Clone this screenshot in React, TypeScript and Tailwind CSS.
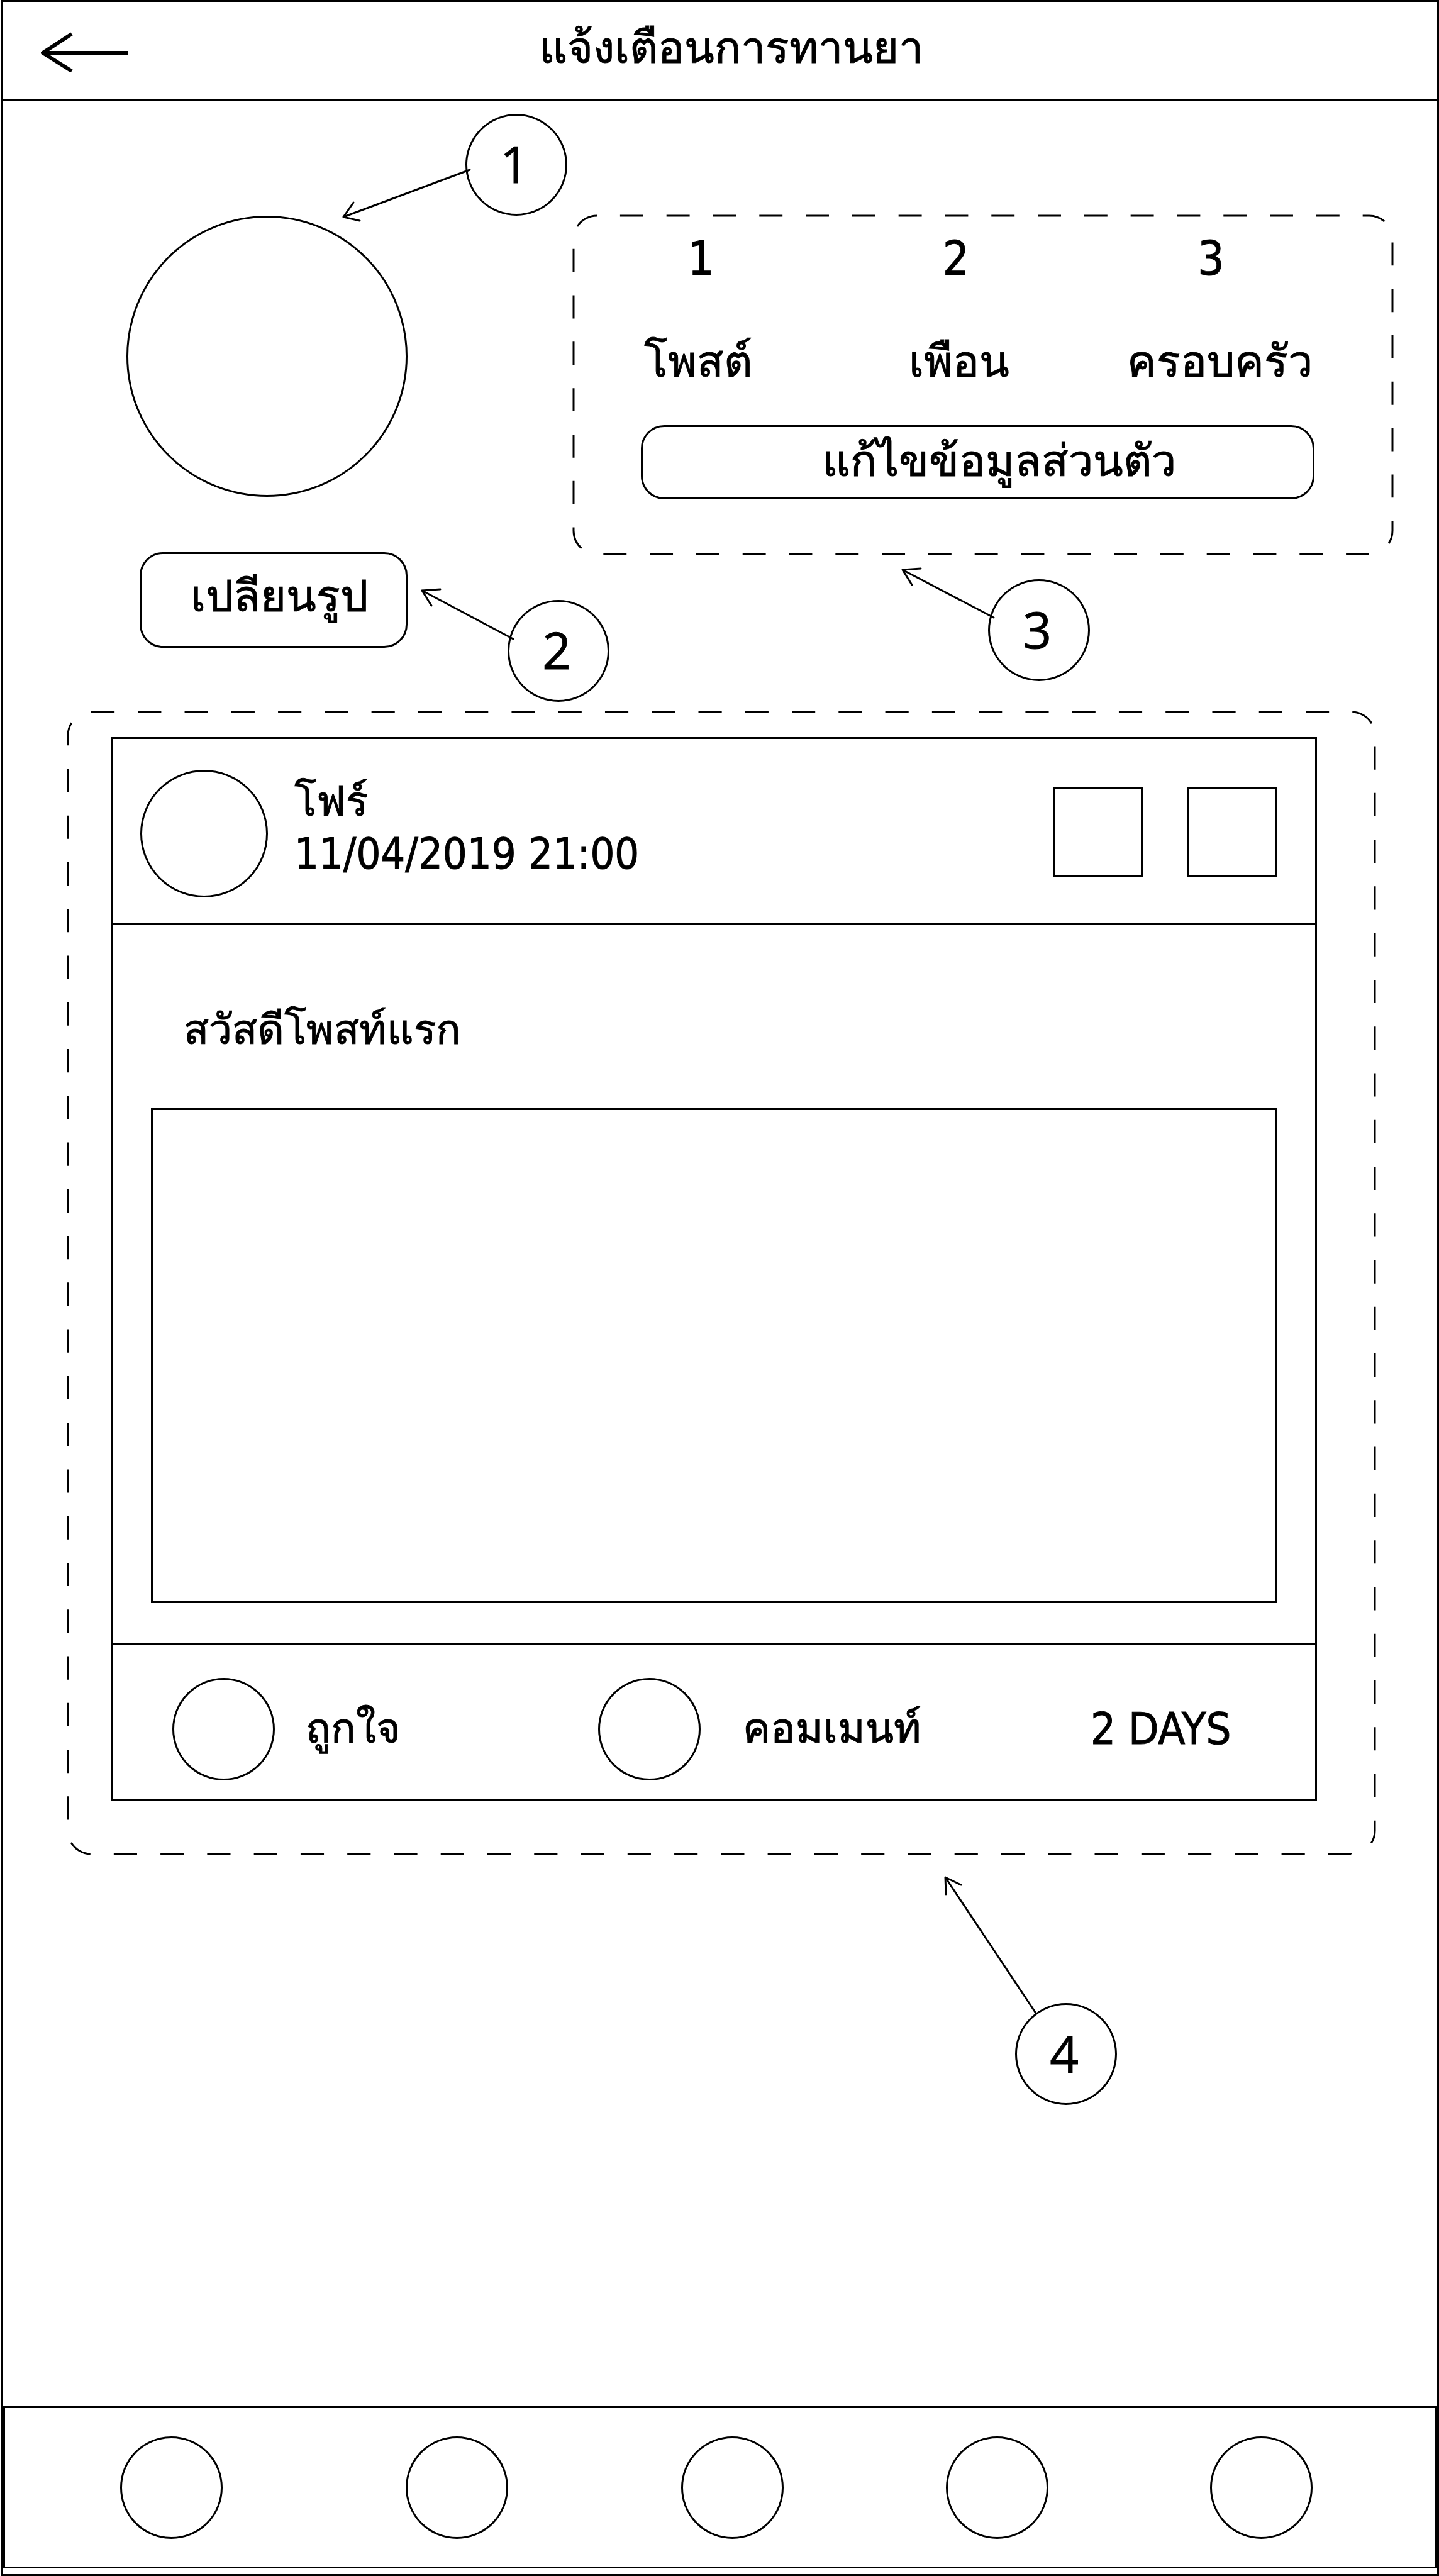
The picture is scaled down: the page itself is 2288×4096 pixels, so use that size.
import type { ReactNode } from "react";

const NAV_ITEMS = ["หน้าแรก", "เพื่อน", "ยา", "ข้อความ", "โปรไฟล์"];

const STATS = [
  { value: "1", label: "โพสต์" },
  { value: "2", label: "เพือน" },
  { value: "3", label: "ครอบครัว" },
];

/** Long-dash rounded outline that follows the size of its parent. */
function DashedOutline({ dashes, offset }: { dashes: number; offset: number }) {
  return (
    <svg className="pointer-events-none absolute inset-0 size-full overflow-visible" aria-hidden="true">
      <rect
        width="100%"
        height="100%"
        rx="37"
        fill="none"
        stroke="black"
        strokeWidth="3"
        pathLength={dashes * 2}
        strokeDasharray="1 1"
        strokeDashoffset={offset}
      />
    </svg>
  );
}

function Badge({ className, children }: { className: string; children: ReactNode }) {
  return (
    <span
      className={`absolute flex size-[162px] items-center justify-center rounded-full border-3 border-black pr-1.5 pb-1 font-['Open_Sans','Noto_Sans',sans-serif] text-[80px] leading-[96px] ${className}`}
    >
      {children}
    </span>
  );
}

function Arrow({ className, d }: { className: string; d: string }) {
  return (
    <svg className={`pointer-events-none absolute overflow-visible ${className}`} aria-hidden="true">
      <path d={d} fill="none" stroke="black" strokeWidth="3" strokeLinecap="round" strokeLinejoin="round" />
    </svg>
  );
}

export default function App() {
  return (
    <div className="ml-0.5 flex min-h-screen flex-col border-3 border-black bg-white font-['DejaVu_Sans_Condensed','DejaVu_Sans',sans-serif] text-black [-webkit-text-stroke:1px_black]">
      <header className="flex h-[158px] items-center border-b-3 border-black pl-[60px]">
        <button type="button" aria-label="กลับ" className="flex w-[140px] items-center pt-1">
          <svg width="140" height="64" viewBox="0 0 140 64" aria-hidden="true">
            <path d="M138 33H4M49 3L3 33L49 62" fill="none" stroke="black" strokeWidth="6" strokeLinejoin="round" />
          </svg>
        </button>
        <h1 className="flex-1 pr-[166px] pb-2.5 text-center text-[70px] leading-[96px]">แจ้งเตือนการทานยา</h1>
      </header>

      <main>
        <section className="flex items-start gap-[264px] pt-[182px] pr-[71px] pl-[196px]">
          <div className="relative flex flex-col items-end gap-[88px]">
            <div className="size-[447px] rounded-full border-3 border-black" />
            <button
              type="button"
              className="h-[152px] w-[426px] rounded-[37px] border-3 border-black pb-3 pl-[18px] text-[70px] leading-[96px]"
            >
              เปลียนรูป
            </button>
            <Badge className="top-[-162px] left-[539px]">1</Badge>
            <Arrow className="top-[-73px] left-[345px] h-[81px] w-[201px]" d="M201 0L0 75M16 52L0 75L26 81" />
            <Badge className="top-[611px] left-[606px]">2</Badge>
            <Arrow className="top-[594px] left-[470px] h-[79px] w-[145px]" d="M145 79L0 2M29 0L0 2L15 26" />
          </div>

          <div className="relative flex-1 pt-5 pb-[87px]">
            <DashedOutline dashes={49} offset={1} />
            <div className="grid grid-cols-3 pr-[86px] text-center text-[74px] leading-[96px]">
              {STATS.map((stat) => (
                <span key={stat.value}>{stat.value}</span>
              ))}
            </div>
            <div className="mt-[68px] -ml-2.5 grid grid-cols-3 pr-[67px] text-center text-[70px] leading-[96px]">
              {STATS.map((stat) => (
                <span key={stat.label}>{stat.label}</span>
              ))}
            </div>
            <div className="mt-[53px] pr-[124px] pl-[107px]">
              <button
                type="button"
                className="h-[118px] w-full rounded-[37px] border-3 border-black pb-1 pl-[68px] text-[70px] leading-[96px]"
              >
                แก้ไขข้อมูลส่วนตัว
              </button>
            </div>
            <Badge className="top-[578px] left-[659px]">3</Badge>
            <Arrow className="top-[561px] left-[523px] h-[78px] w-[145px]" d="M145 78L0 2M29 0L0 2L15 26" />
          </div>
        </section>

        <section className="relative mt-[102px] mr-[99px] ml-[103px] pt-10 pr-[92px] pb-[84px] pl-[68px]">
          <DashedOutline dashes={104} offset={0} />
          <article className="border-3 border-black text-[66px]">
            <div className="flex h-[296px] items-center border-b-3 border-black pt-2 pr-[60px] pl-11">
              <div className="size-[203px] rounded-full border-3 border-black" />
              <div className="ml-[42px] pb-5 leading-[83px]">
                <h2>โฟร์</h2>
                <p className="text-[68px]">11/04/2019 21:00</p>
              </div>
              <div className="ml-auto flex gap-[71px] pb-1">
                <button type="button" aria-label="แก้ไขโพสต์" className="size-[143px] border-3 border-black" />
                <button type="button" aria-label="ลบโพสต์" className="size-[143px] border-3 border-black" />
              </div>
            </div>

            <div className="pt-[119px] pr-[60px] pb-[63px] pl-[61px]">
              <p className="pl-[52px] leading-[96px]">สวัสดีโพสท์แรก</p>
              <div className="mt-[76px] h-[787px] border-3 border-black" />
            </div>

            <div className="grid h-[249px] grid-cols-[677fr_783fr_357fr] items-center border-t-3 border-black pt-[22px] pl-[95px] leading-[96px]">
              <button type="button" className="flex items-center gap-[49px]">
                <span className="size-[163px] rounded-full border-3 border-black" />
                ถูกใจ
              </button>
              <button type="button" className="flex items-center gap-[67px]">
                <span className="size-[163px] rounded-full border-3 border-black" />
                คอมเมนท์
              </button>
              <span className="text-[70px]">2 DAYS</span>
            </div>
          </article>
          <Badge className="top-[2053px] left-[1506px]">4</Badge>
          <Arrow className="top-[1853px] left-[1395px] h-[216px] w-[144px]" d="M144 216L0 0M25 12L0 0L1 27" />
        </section>
      </main>

      <nav className="mt-auto mb-[9px] grid h-[258px] grid-cols-[455fr_439fr_421fr_421fr_163fr] items-center border-3 border-black pr-[195px] pl-[183px]">
        {NAV_ITEMS.map((item) => (
          <button key={item} type="button" aria-label={item} className="size-[163px] rounded-full border-3 border-black" />
        ))}
      </nav>
    </div>
  );
}
